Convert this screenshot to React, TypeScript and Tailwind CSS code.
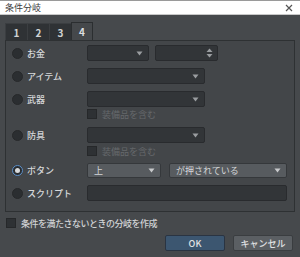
import React from "react";

const font = { fontFamily: '"Noto Sans CJK JP", "Noto Sans", sans-serif' };

function Arrow({ light = false }: { light?: boolean }) {
  return (
    <svg width="7" height="5" viewBox="0 0 7 5" className="shrink-0">
      <path d="M0.5 0.5 H6.5 L3.5 4.5 Z" fill={light ? "#c8cacc" : "#9a9da0"} />
    </svg>
  );
}

function Radio({ checked = false }: { checked?: boolean }) {
  if (checked) {
    return (
      <div className="w-[11px] h-[11px] rounded-full border border-[#5b8fc9] bg-[#2a2d30] flex items-center justify-center shrink-0">
        <div className="w-[5px] h-[5px] rounded-full bg-[#d8dadc]" />
      </div>
    );
  }
  return <div className="w-[11px] h-[11px] rounded-full bg-[#2b2e31] border border-[#27292b] shrink-0" />;
}

function Check() {
  return <div className="w-[10px] h-[10px] bg-[#2e3134] border border-[#26282a] shrink-0" />;
}

function Select({ w, text, active = false, h = "h-[16px]" }: { w: string; text?: string; active?: boolean; h?: string }) {
  return (
    <div
      className={`${w} ${h} rounded-[2px] border flex items-center justify-between pl-[6px] pr-[5px] ${
        active ? "bg-[#575b5f] border-[#35383b] text-[#d4d6d8]" : "bg-[#323538] border-[#292b2e]"
      }`}
    >
      <span className="text-[9px] leading-none">{text}</span>
      <Arrow light={active} />
    </div>
  );
}

function Label({ children, checked = false }: { children: React.ReactNode; checked?: boolean }) {
  return (
    <div className="w-[81px] pl-[6px] flex items-center gap-[4px] shrink-0">
      <Radio checked={checked} />
      <span className="text-[9px] font-medium text-[#d6d8da] leading-none">{children}</span>
    </div>
  );
}

export default function App() {
  return (
    <div className="w-[300px] h-[257px] bg-[#46494c] flex flex-col overflow-hidden" style={font}>
      <div className="h-[15px] bg-white border-t border-[#9a9a9a] border-b border-b-[#c8c8c8] flex items-center justify-between px-[5px]">
        <span className="text-[9px] text-[#404040] leading-none">条件分岐</span>
        <svg width="8" height="8" viewBox="0 0 8 8" className="mr-[2px]">
          <path d="M1 1 L7 7 M7 1 L1 7" stroke="#555" strokeWidth="1.2" />
        </svg>
      </div>
      <div className="flex flex-col px-[5px] pt-[7px]">
        <div className="flex items-end h-[18px]">
          {["1", "2", "3"].map((t) => (
            <div
              key={t}
              className="w-[22px] h-[17px] bg-[#2f3235] border-t border-l border-[#3b3e41] flex items-center justify-center text-[10px] text-[#d0d2d4] font-bold"
            >
              {t}
            </div>
          ))}
          <div className="w-[22px] h-[18px] bg-[#45484b] border-t border-l border-r border-[#2b2e30] flex items-center justify-center text-[10px] text-[#dcdee0] font-bold">
            4
          </div>
        </div>
        <div className="h-[172px] border border-[#2e3133] bg-[#434649] flex flex-col pt-[4px] pr-[7px]">
          <div className="flex items-center h-[16px]">
            <Label>お金</Label>
            <Select w="w-[62px]" />
            <div className="ml-[6px] w-[63px] h-[16px] rounded-[2px] bg-[#323538] border border-[#292b2e] flex items-center justify-end pr-[4px]">
              <svg width="7" height="10" viewBox="0 0 7 10">
                <path d="M0.5 4 H6.5 L3.5 0.5 Z" fill="#9a9da0" />
                <path d="M0.5 6 H6.5 L3.5 9.5 Z" fill="#9a9da0" />
              </svg>
            </div>
          </div>
          <div className="flex items-center h-[16px] mt-[7px]">
            <Label>アイテム</Label>
            <Select w="w-[118px]" />
          </div>
          <div className="flex items-center h-[16px] mt-[7px]">
            <Label>武器</Label>
            <Select w="w-[118px]" />
          </div>
          <div className="flex items-center h-[10px] mt-[2px] pl-[81px] gap-[5px]">
            <Check />
            <span className="text-[9px] text-[#66696c] leading-none">装備品を含む</span>
          </div>
          <div className="flex items-center h-[16px] mt-[8px]">
            <Label>防具</Label>
            <Select w="w-[118px]" />
          </div>
          <div className="flex items-center h-[10px] mt-[3px] pl-[81px] gap-[5px]">
            <Check />
            <span className="text-[9px] text-[#66696c] leading-none">装備品を含む</span>
          </div>
          <div className="flex items-center h-[15px] mt-[7px]">
            <Label checked>ボタン</Label>
            <Select w="w-[74px]" h="h-[15px]" text="上" active />
            <div className="ml-[8px]">
              <Select w="w-[118px]" h="h-[15px]" text="が押されている" active />
            </div>
          </div>
          <div className="flex items-center h-[16px] mt-[7px]">
            <Label>スクリプト</Label>
            <div className="w-[200px] h-[16px] rounded-[2px] bg-[#323538] border border-[#292b2e]" />
          </div>
        </div>
        <div className="flex items-center h-[12px] mt-[5px] pl-[1px] gap-[5px]">
          <Check />
          <span className="text-[9px] font-medium text-[#d0d2d4] leading-none tracking-[-0.5px]">条件を満たさないときの分岐を作成</span>
        </div>
        <div className="flex justify-end gap-[8px] mt-[6px] pr-[2px]">
          <div className="w-[60px] h-[16px] rounded-[2px] bg-[#3c5670] border border-[#2a3442] flex items-center justify-center text-[9px] font-medium text-[#e0e2e4] leading-none">
            OK
          </div>
          <div className="w-[60px] h-[16px] rounded-[2px] bg-[#5b5f63] border border-[#3a3d40] flex items-center justify-center text-[9px] font-medium text-[#e0e2e4] leading-none">
            キャンセル
          </div>
        </div>
      </div>
    </div>
  );
}
